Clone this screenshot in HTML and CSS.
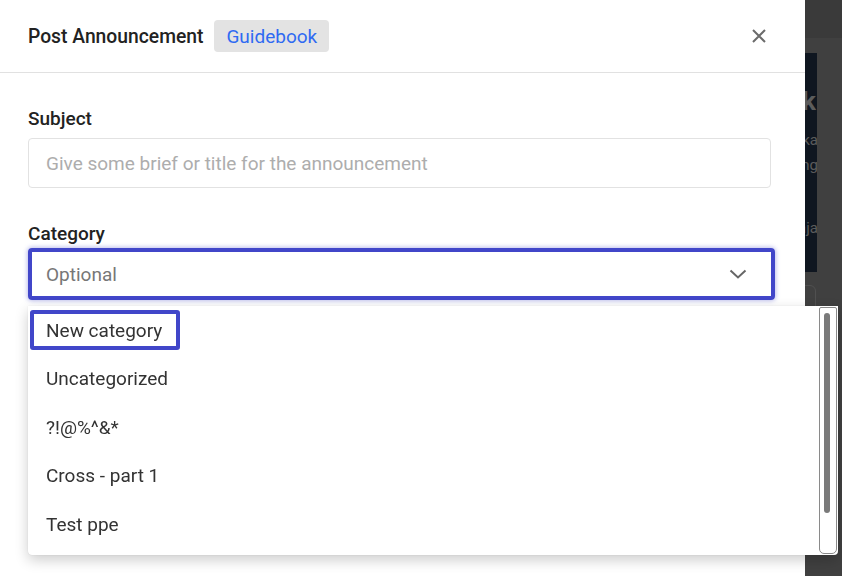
FILE: index.html
```html
<!DOCTYPE html>
<html lang="en">
<head>
<meta charset="utf-8">
<title>Post Announcement</title>
<link rel="stylesheet" href="styles.css">
</head>
<body>
<div class="backdrop">
  <div class="topbar"></div>
  <div class="bg-content">
    <div class="hero">
      <div class="hero-title">k</div>
      <div class="hero-line">ka</div>
      <div class="hero-line">ng</div>
      <div class="hero-line hero-gap">aja</div>
    </div>
    <div class="bg-box"></div>
  </div>
</div>

<div class="modal">
  <header class="modal-header">
    <h1 class="modal-title">Post Announcement</h1>
    <span class="chip">Guidebook</span>
    <button class="close" aria-label="Close">
      <svg width="16" height="16" viewBox="0 0 16 16"><path d="M2 2 L14 14 M14 2 L2 14" stroke="#6b6b6b" stroke-width="2" fill="none"/></svg>
    </button>
  </header>
  <div class="modal-body">
    <label class="label">Subject</label>
    <div class="input">Give some brief or title for the announcement</div>
    <label class="label label-cat">Category</label>
    <div class="select">
      <span>Optional</span>
      <svg width="18" height="12" viewBox="0 0 18 12"><path d="M1.5 2.5 L9 9.5 L16.5 2.5" stroke="#666" stroke-width="2" fill="none"/></svg>
    </div>
  </div>

  <div class="dropdown">
    <ul class="options">
      <li class="option"><span class="focused">New category</span></li>
      <li class="option">Uncategorized</li>
      <li class="option">?!@%^&amp;*</li>
      <li class="option">Cross - part 1</li>
      <li class="option">Test ppe</li>
    </ul>
    <div class="scrollbar"><div class="thumb"></div></div>
  </div>
</div>
</body>
</html>
```
FILE: styles.css
```css
* { box-sizing: border-box; }
html, body { margin: 0; padding: 0; height: 100%; }
body {
  font-family: Roboto, "Noto Sans", Arial, sans-serif;
  background: #404040;
  overflow: hidden;
}

/* dimmed page behind the modal */
.backdrop { height: 100%; display: flex; flex-direction: column; }
.topbar { height: 38px; background: #3a3a3a; }
.bg-content { padding-top: 15px; display: flex; flex-direction: column; align-items: flex-end; padding-right: 25px; }
.hero {
  width: 300px; height: 219px; background: #0f1620; overflow: hidden;
  text-align: right; color: #5c5c5c; padding-top: 33px;
}
.hero-title { font-size: 26px; font-weight: 700; line-height: 30px; margin-right: 1px; }
.hero-line { font-size: 15px; line-height: 24px; margin-top: 12px; margin-right: -1px; }
.hero-line + .hero-line { margin-top: 1px; }
.hero-gap { margin-top: 39px !important; }
.bg-box {
  width: 300px; height: 120px; margin-top: 13px; margin-right: 1px;
  border: 1px solid #505050; border-radius: 6px;
}

/* modal */
.modal {
  position: fixed; left: 0; top: 0; bottom: 0; width: 805px;
  background: #fff;
}
.modal-header {
  height: 73px; display: flex; align-items: center;
  padding: 0 38px 0 28px; border-bottom: 1px solid #e1e1e1;
}
.modal-title { margin: 0; font-size: 19.3px; font-weight: 500; color: #222; }
.chip {
  margin-left: 11px; height: 32px; padding: 0 12px; display: flex; align-items: center;
  background: #e3e3e3; border-radius: 4px; color: #2f6af2; font-size: 19px;
}
.close {
  margin-left: auto; border: 0; background: none; padding: 0; width: 16px; height: 16px;
  display: flex; cursor: pointer;
}

.modal-body { padding: 36px 34px 0 28px; display: flex; flex-direction: column; }
.label { font-size: 19px; font-weight: 500; color: #222; line-height: 20px; }
.input {
  margin-top: 9px; height: 50px; border: 1px solid #e2e2e2; border-radius: 4px;
  padding: 0 17px; display: flex; align-items: center;
  color: #adadad; font-size: 19px;
}
.label-cat { margin-top: 36px; }
.select {
  margin-top: 4px; width: 747px; height: 52px; border: 4px solid #4146c9; border-radius: 4px;
  box-shadow: 0 0 4px 1px rgba(65, 70, 201, 0.35);
  padding: 0 24px 0 14px; display: flex; align-items: center; justify-content: space-between;
  color: #777; font-size: 19px;
}

/* dropdown menu overlaying the modal */
.dropdown {
  position: absolute; left: 28px; top: 306px; width: 810px; height: 249px;
  background: #fff; border-radius: 0 0 4px 4px;
  box-shadow: 0 5px 14px rgba(0, 0, 0, 0.2), 0 0 1px rgba(0,0,0,0.2);
  display: flex;
}
.options { list-style: none; margin: 0; padding: 0; flex: 1; }
.option {
  height: 48.5px; display: flex; align-items: center; padding-left: 18px;
  font-size: 19px; color: #333;
}
.focused {
  margin-left: -16px; height: 40px; display: flex; align-items: center;
  padding: 0 14px 0 12px; border: 4px solid #4146c9; border-radius: 3px;
}
.scrollbar {
  width: 18px; margin: 1px 1px 1px 0; border: 1px solid #8a8a8a; border-radius: 2px 2px 5px 5px;
  background: #fff; padding: 5px 0 0 4px;
}
.thumb { width: 6px; height: 200px; background: #7a7a7a; border-radius: 3px; }
```
